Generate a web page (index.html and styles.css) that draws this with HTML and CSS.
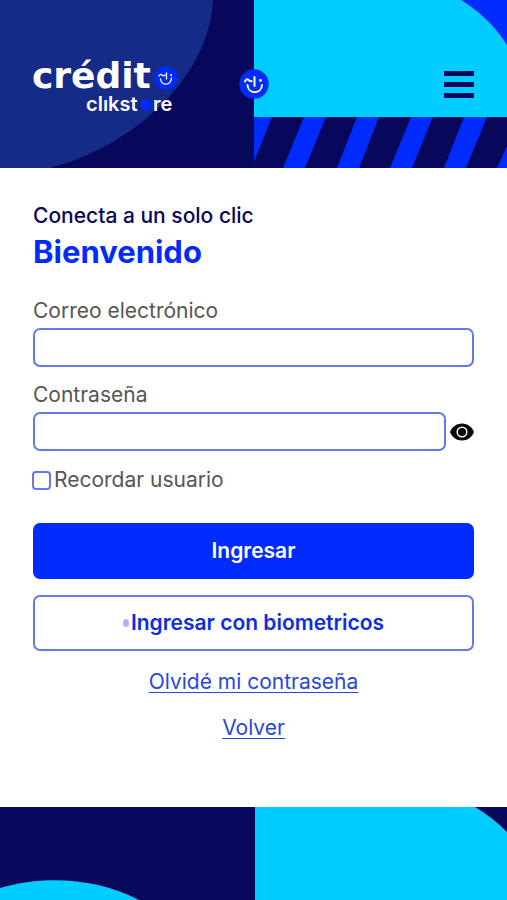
FILE: index.html
```html
<!DOCTYPE html>
<html lang="es">
<head>
<meta charset="utf-8">
<meta name="viewport" content="width=device-width, initial-scale=1">
<title>Crédito Clikstore</title>
<link rel="stylesheet" href="styles.css">
</head>
<body>
<header class="header">
  <svg class="backdrop" viewBox="0 0 507 168" preserveAspectRatio="xMidYMid slice" aria-hidden="true">
    <rect width="507" height="168" fill="#07075b"/>
    <path d="M0 0H213C209 80 130 147 50 168H0Z" fill="#162a88"/>
    <path d="M254 0H507V117H254Z" fill="#00cdff"/>
    <path d="M461 0H507V45Q490 18 461 0Z" fill="#002bff"/>
    <path d="M254 117H272L254 162ZM304 117H326L305 168H283ZM357 117H379L359 168H337ZM411 117H433L412 168H390ZM464 117H487L466 168H444ZM507 146V168H497Z" fill="#002bff"/>
  </svg>
  <a class="logo" href="#" aria-label="Crédito Clikstore">
    <svg class="logo-art" viewBox="0 0 146 64" aria-hidden="true">
      <text class="logo-main" x="-1" y="36">crédit</text>
      <circle cx="133" cy="26" r="11.500" fill="#002bff"/>
      <g fill="none" stroke="#fff" stroke-width="1.300" stroke-linecap="round">
        <path d="M126 24q1.500-2.500 3-1t3 0M133.500 21v6M127.500 27c1 7 10 7 11-1"/>
      </g>
      <circle cx="138" cy="23" r="1" fill="#fff"/>
      <text class="logo-sub" x="53" y="59">clıkst</text>
      <text class="logo-sub" x="120" y="59">re</text>
      <circle cx="73" cy="46" r="1.500" fill="#002bff"/>
      <circle cx="113" cy="53" r="5.500" fill="#002bff"/>
    </svg>
  </a>
  <svg class="badge" viewBox="0 0 30 30" aria-hidden="true">
    <circle cx="15" cy="15" r="14.700" fill="#002bff"/>
    <g fill="none" stroke="#fff" stroke-width="2" stroke-linecap="round">
      <path d="M6 12.500Q7.500 9 9.500 11T12.500 12M15.500 8V17M8.500 16C9 25.500 22.500 25.500 23 16"/>
    </g>
    <circle cx="21.500" cy="11.500" r="1.400" fill="#fff"/>
  </svg>
  <button class="menu" type="button" aria-label="Menú">
    <svg class="menu-icon" viewBox="0 0 30 28" aria-hidden="true"><path d="M0 1H30V6H0ZM0 12H30V17H0ZM0 23H30V28H0Z" fill="#07075b"/></svg>
  </button>
</header>
<main class="main">
  <p class="tagline">Conecta a un solo clic</p>
  <h1 class="title">Bienvenido</h1>
  <form class="form">
    <div class="field">
      <label for="email">Correo electrónico</label>
      <input class="input" id="email" type="email">
    </div>
    <div class="field">
      <label for="password">Contraseña</label>
      <div class="password-row">
        <input class="input" id="password" type="password">
        <button class="eye" type="button" aria-label="Mostrar contraseña">
          <svg class="eye-icon" viewBox="0 0 24 18" aria-hidden="true">
            <path d="M0 9C2 4 6.500 0.500 12 0.500S22 4 24 9C22 14 17.500 17.500 12 17.500S2 14 0 9Z" fill="#050505"/>
            <circle cx="12" cy="9" r="4.800" fill="none" stroke="#fff" stroke-width="1.500"/>
          </svg>
        </button>
      </div>
    </div>
    <label class="remember"><input class="check" type="checkbox">Recordar usuario</label>
    <div class="actions">
      <button class="btn btn-primary" type="submit">Ingresar</button>
      <button class="btn btn-outline" type="button"><span class="dot"></span>Ingresar con biometricos</button>
      <a class="link" href="#">Olvidé mi contraseña</a>
      <a class="link" href="#">Volver</a>
    </div>
  </form>
</main>
<footer class="footer">
  <svg class="backdrop" viewBox="0 0 507 93" preserveAspectRatio="xMidYMid slice" aria-hidden="true">
    <rect width="507" height="93" fill="#07075b"/>
    <path d="M0 81C45 68 96 71 139 93H0Z" fill="#00cdff"/>
    <path d="M255 0H475Q492 10 507 25V93H255Z" fill="#00cdff"/>
  </svg>
</footer>
</body>
</html>
```
FILE: styles.css
```css
* { box-sizing: border-box; }

body {
  margin: 0;
  min-height: 100vh;
  display: flex;
  flex-direction: column;
  background: #fff;
  color: #565656;
  font: 400 21px/30px Inter, "Open Sans", sans-serif;
}

.header {
  position: relative;
  display: grid;
  grid-template-columns: 1fr 30px 1fr;
  align-items: center;
  padding: 52px 33px;
}

.backdrop {
  position: absolute;
  inset: 0;
  width: 100%;
  height: 100%;
}

.logo, .badge, .menu { position: relative; }
.logo-art { display: block; width: 146px; height: 64px; overflow: visible; }
.logo-main { font-family: "DejaVu Sans", sans-serif; font-size: 36px; font-weight: 700; fill: #fff; }
.logo-sub { font-size: 20px; font-weight: 600; fill: #fff; }
.badge { width: 30px; height: 30px; }

.menu, .eye {
  padding: 0;
  border: 0;
  background: none;
  cursor: pointer;
}

.menu { justify-self: end; }
.menu-icon { display: block; width: 30px; height: 28px; }

.main {
  flex: 1;
  padding: 32px 33px;
}

.tagline {
  margin: 0;
  color: #07075b;
  font-weight: 500;
  line-height: 32px;
}

.title {
  margin: 0 0 24px;
  color: #002bff;
  font-size: 31px;
  font-weight: 700;
  line-height: 40px;
}

.field {
  display: flex;
  flex-direction: column;
  gap: 2px;
  margin-bottom: 13px;
}

.input {
  width: 100%;
  min-width: 0;
  height: 39px;
  padding: 0 12px;
  border: 2px solid #637be6;
  border-radius: 7px;
  background: #fff;
  font: inherit;
}

.password-row {
  display: flex;
  align-items: center;
  gap: 4px;
}

.eye { flex: none; }
.eye-icon { display: block; width: 24px; height: 18px; }

.remember {
  display: flex;
  align-items: center;
  gap: 3px;
  margin-left: -1px;
  line-height: 32px;
}

.check {
  appearance: none;
  width: 19px;
  height: 19px;
  margin: 0;
  border: 2px solid #637be6;
  border-radius: 4px;
}

.check:checked { background: #002bff; }

.actions {
  display: flex;
  flex-direction: column;
  align-items: center;
  gap: 16px;
  padding-top: 27px;
}

.btn {
  display: flex;
  align-items: center;
  justify-content: center;
  gap: 2px;
  width: 100%;
  height: 56px;
  border: 2px solid #637be6;
  border-radius: 7px;
  font: inherit;
  font-weight: 600;
  cursor: pointer;
}

.btn-primary { border-color: #002bff; background: #002bff; color: #fff; }
.btn-outline { background: #fff; color: #0c2de0; }

.dot {
  width: 6px;
  height: 8px;
  border-radius: 50%;
  background: #a9b4f5;
}

.link { color: #2947dc; text-decoration-thickness: 1px; text-underline-offset: 3px; }

.footer {
  position: relative;
  height: 93px;
}
```
